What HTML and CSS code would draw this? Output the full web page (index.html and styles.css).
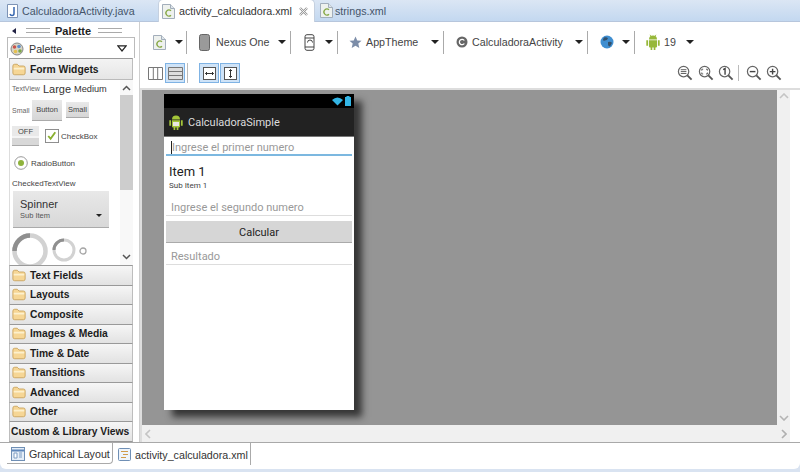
FILE: index.html
```html
<!DOCTYPE html>
<html lang="es">
<head>
<meta charset="utf-8">
<title>activity_calculadora.xml</title>
<link rel="stylesheet" href="styles.css">
</head>
<body>
<svg class="defs" width="0" height="0" aria-hidden="true">
  <symbol id="xml" viewBox="0 0 13 15"><path d="M.5.5h8l4 4v10H.5z" fill="#eef1ee" stroke="#a3aebb"/><path d="M8.500.5v4h4" fill="#dfe5ea" stroke="#a3aebb"/><path d="M9 6.800a3 3 0 1 0 0 4.400" fill="none" stroke="#86a844" stroke-width="1.300"/></symbol>
  <symbol id="folder" viewBox="0 0 16 14"><path d="M1 3q0-2 2-2h3l2 2h5q2 0 2 2v6q0 2-2 2H3q-2 0-2-2z" fill="#f6d695" stroke="#c8a25c"/><path d="M2 6h12" stroke="#fdf0cc" stroke-width="2"/></symbol>
  <symbol id="caret" viewBox="0 0 8 4"><path d="M0 0h8L4 4z" fill="#222"/></symbol>
  <symbol id="droid" viewBox="0 0 16 16"><path d="M4 5.500a4 4 0 0 1 8 0z M4 6.300h8v6.200q0 1-1 1h-.6V16H8.700v-2.500H7.300V16H5.600v-2.500H5q-1 0-1-1z M1.300 6.300h1.800v5.500H1.300z M12.900 6.300h1.800v5.500h-1.800z" fill="#97b83a"/><path d="M5 .8l1.300 2M11 .8L9.700 2.800" stroke="#97b83a" stroke-width=".8"/></symbol>
  <symbol id="zoom" viewBox="0 0 17 17"><circle cx="7" cy="7" r="5.500" fill="#fff" stroke="#666" stroke-width="1.300"/><path d="M11 11l4.500 4.500" stroke="#555" stroke-width="2"/></symbol>
</svg>

<div class="window">
  <nav class="tabs">
    <div class="tab java"><svg class="ic-java" viewBox="0 0 11 14"><path d="M.5.500h10v13H.5z" fill="#fff" stroke="#7d93b5"/><path d="M7 3v6.500q0 2-2 2-1.500 0-2-1.500" fill="none" stroke="#3566b0" stroke-width="1.500"/></svg><span>CalculadoraActivity.java</span></div>
    <div class="tab active"><svg class="ic-xml"><use href="#xml"/></svg><span>activity_calculadora.xml</span><svg class="close" viewBox="0 0 9 9"><path d="M1 1l7 7M8 1L1 8" stroke="#999" stroke-width="2.400"/><path d="M1 1l7 7M8 1L1 8" stroke="#fff" stroke-width=".8"/></svg></div>
    <div class="tab strings"><svg class="ic-xml"><use href="#xml"/></svg><span>strings.xml</span></div>
  </nav>

  <div class="editor">
    <div class="main">
      <aside class="palette">
        <div class="pal-title"><span class="back"></span><span class="grip"></span><b>Palette</b><span class="grip"></span></div>
        <div class="pal-select">
          <svg class="i14" viewBox="0 0 14 14"><circle cx="7" cy="7" r="6" fill="#d9d4c4" stroke="#888"/><circle cx="4.500" cy="5" r="1.800" fill="#c9534b"/><circle cx="9" cy="4.500" r="1.800" fill="#5b8fce"/><circle cx="10" cy="9" r="1.800" fill="#7ba64a"/><circle cx="5.500" cy="9.500" r="1.800" fill="#e6c04f"/></svg>
          <span>Palette</span>
          <svg class="tri" viewBox="0 0 10 7"><path d="M.8.800h8.400L5 6z" fill="#fff" stroke="#222" stroke-width="1.200"/></svg>
        </div>
        <div class="acc open"><svg class="fold"><use href="#folder"/></svg>Form Widgets</div>
        <div class="widgets">
          <div class="w-list">
            <div class="w-row r1"><span class="tiny">TextView</span><span class="large">Large</span><span class="medium">Medium</span></div>
            <div class="w-row r2"><span class="tiny small-l">Small</span><span class="btn b-normal">Button</span><span class="btn b-small">Small</span></div>
            <div class="w-row r3"><span class="btn b-off">OFF</span><svg class="check" viewBox="0 0 15 15"><rect x=".5" y=".5" width="14" height="14" fill="#fff" stroke="#888"/><path d="M3.500 7.500l2.500 3 5-7" fill="none" stroke="#8ab030" stroke-width="2"/></svg><span class="w-text">CheckBox</span></div>
            <div class="w-row r4"><svg class="radio" viewBox="0 0 14 14"><circle cx="7" cy="7" r="6.300" fill="#fff" stroke="#999"/><circle cx="7" cy="7" r="3" fill="#8fb33c"/></svg><span class="w-text">RadioButton</span></div>
            <div class="w-row r5"><span class="w-text">CheckedTextView</span></div>
            <div class="spinner"><div><div class="sp-main">Spinner</div><div class="sp-sub">Sub Item</div></div><svg class="sp-caret"><use href="#caret"/></svg></div>
            <div class="w-row r7">
              <svg class="ring-l" viewBox="0 0 36 36"><circle cx="18" cy="18" r="15.500" fill="none" stroke="#d2d2d2" stroke-width="4.500"/><path d="M2.500 18A15.500 15.500 0 0 1 18 2.500" fill="none" stroke="#8f8f8f" stroke-width="4.500"/></svg>
              <svg class="ring-m" viewBox="0 0 24 24"><circle cx="12" cy="12" r="10" fill="none" stroke="#d2d2d2" stroke-width="3"/><path d="M12 2A10 10 0 0 0 2 12" fill="none" stroke="#8f8f8f" stroke-width="3"/></svg>
              <svg class="ring-s" viewBox="0 0 8 8"><circle cx="4" cy="4" r="3" fill="none" stroke="#a5a5a5" stroke-width="1.300"/></svg>
            </div>
          </div>
          <div class="vbar">
            <svg class="arrow" viewBox="0 0 9 6"><path d="M1 5l3.500-3.500L8 5" fill="none" stroke="#555" stroke-width="1.500"/></svg>
            <div class="thumb"></div>
            <svg class="arrow" viewBox="0 0 9 6"><path d="M1 1l3.500 3.500L8 1" fill="none" stroke="#555" stroke-width="1.500"/></svg>
          </div>
        </div>
        <div class="acc"><svg class="fold"><use href="#folder"/></svg>Text Fields</div>
        <div class="acc"><svg class="fold"><use href="#folder"/></svg>Layouts</div>
        <div class="acc"><svg class="fold"><use href="#folder"/></svg>Composite</div>
        <div class="acc"><svg class="fold"><use href="#folder"/></svg>Images &amp; Media</div>
        <div class="acc"><svg class="fold"><use href="#folder"/></svg>Time &amp; Date</div>
        <div class="acc"><svg class="fold"><use href="#folder"/></svg>Transitions</div>
        <div class="acc"><svg class="fold"><use href="#folder"/></svg>Advanced</div>
        <div class="acc"><svg class="fold"><use href="#folder"/></svg>Other</div>
        <div class="acc custom">Custom &amp; Library Views</div>
      </aside>

      <section class="work">
        <div class="toolbar tb1">
          <div class="tb-item t-cfg"><svg class="ic-xml"><use href="#xml"/></svg><svg class="car"><use href="#caret"/></svg></div>
          <div class="tb-item t-dev"><svg class="phone-ic" viewBox="0 0 11 17"><rect x=".5" y=".5" width="10" height="16" rx="2" fill="#9a9a9a" stroke="#666"/></svg><span>Nexus One</span><svg class="car"><use href="#caret"/></svg></div>
          <div class="tb-item t-rot"><svg class="rot-ic" viewBox="0 0 12 17"><rect x="1" y=".7" width="9" height="15.600" rx="2" fill="#fff" stroke="#444"/><path d="M1 4h9M1 13h9M3.500 8.500a2.500 2.500 0 0 1 5 0" fill="none" stroke="#444"/></svg><svg class="car"><use href="#caret"/></svg></div>
          <div class="tb-item t-theme"><svg class="star" viewBox="0 0 14 14"><path d="M7 .5l1.900 4.300 4.600.4-3.500 3 1.100 4.600L7 10.400l-4.100 2.400L4 8.200.5 5.200l4.600-.4z" fill="#7c8da8"/></svg><span>AppTheme</span><svg class="car"><use href="#caret"/></svg></div>
          <div class="tb-item t-act"><svg class="c-ic" viewBox="0 0 12 12"><circle cx="6" cy="6" r="5.500" fill="#666"/><path d="M8.300 4.500a2.700 2.700 0 1 0 0 3" fill="none" stroke="#fff" stroke-width="1.300"/></svg><span>CalculadoraActivity</span><svg class="car"><use href="#caret"/></svg></div>
          <div class="tb-item t-glob"><svg class="globe" viewBox="0 0 14 14"><circle cx="7" cy="7" r="6.500" fill="#3f8ed0"/><path d="M4 2.500q3-1 4 1-1 2-3 2-2 1-2-1zM8 7q3-1 4 1l-2 3.500q-2 0-2-2z" fill="#33506b"/></svg><svg class="car"><use href="#caret"/></svg></div>
          <div class="tb-item t-api"><svg class="ic-droid"><use href="#droid"/></svg><span>19</span><svg class="car"><use href="#caret"/></svg></div>
        </div>
        <div class="toolbar tb2">
          <div class="tog"><span class="tg"><svg viewBox="0 0 15 13"><path d="M.5.500h14v12H.5zM5.300.500v12M9.700.500v12" fill="#fff" stroke="#777"/></svg></span><span class="tg on"><svg viewBox="0 0 15 13"><path d="M.5.500h14v12H.5z" fill="#ddd" stroke="#777"/><path d="M.5 4.500h14M.5 8.500h14" stroke="#777"/></svg></span></div>
          <span class="vsep"></span>
          <div class="tog fit"><span class="tg on"><svg viewBox="0 0 13 13"><rect x=".5" y=".5" width="12" height="12" fill="#fff" stroke="#555"/><path d="M2.500 6.500h8M4 5L2.500 6.500 4 8M9 5l1.500 1.500L9 8" fill="none" stroke="#333"/></svg></span><span class="tg on"><svg viewBox="0 0 13 13"><rect x=".5" y=".5" width="12" height="12" fill="#fff" stroke="#555"/><path d="M6.500 2.500v8M5 4l1.500-1.500L8 4M5 9l1.500 1.500L8 9" fill="none" stroke="#333"/></svg></span></div>
          <div class="zooms">
            <svg class="z z1" viewBox="0 0 17 17"><use href="#zoom"/><path d="M4 5h6M4 7h6M4 9h6" stroke="#555"/></svg>
            <svg class="z" viewBox="0 0 17 17"><use href="#zoom"/><path d="M4 4.500h1.500M8.500 4.500H10M4 9.500h1.500M8.500 9.500H10M4 4.500V6M10 4.500V6M4 8v1.500M10 8v1.500" stroke="#555"/></svg>
            <svg class="z" viewBox="0 0 17 17"><use href="#zoom"/><path d="M5.500 5l2-1.200v6.500" fill="none" stroke="#444" stroke-width="1.500"/></svg>
            <span class="zsep"></span>
            <svg class="z" viewBox="0 0 17 17"><use href="#zoom"/><path d="M4 7h6" stroke="#444" stroke-width="1.500"/></svg>
            <svg class="z" viewBox="0 0 17 17"><use href="#zoom"/><path d="M4 7h6M7 4v6" stroke="#444" stroke-width="1.500"/></svg>
          </div>
        </div>
        <div class="canvas-area">
          <div class="canvas-row">
            <div class="canvas">
              <div class="device">
                <div class="status">
                  <svg class="wifi" viewBox="0 0 11 9"><path d="M5.500 8.500L0 3q5.500-5 11 0z" fill="#33b5e5"/></svg>
                  <svg class="batt" viewBox="0 0 6 10"><path d="M1.500 0h3v1H6v9H0V1h1.500z" fill="#33b5e5"/></svg>
                </div>
                <div class="actionbar">
                  <svg class="app-ic" viewBox="0 0 16 16"><path d="M4 5.500a4 4 0 0 1 8 0z M4 6.300h8v6.200q0 1-1 1h-.6V16H8.700v-2.500H7.300V16H5.600v-2.500H5q-1 0-1-1z M1.300 6.300h1.800v5.500H1.300z M12.900 6.300h1.800v5.500h-1.800z" fill="#a4c639"/><rect x="5" y="8" width="6" height="4" fill="#e8e8e0"/></svg>
                  <span>CalculadoraSimple</span>
                </div>
                <div class="screen">
                  <div class="field focus"><i class="cursor"></i>Ingrese el primer numero</div>
                  <div class="item"><div class="item-t">Item 1</div><div class="item-s">Sub Item 1</div></div>
                  <div class="field second">Ingrese el segundo numero</div>
                  <div class="calc">Calcular</div>
                  <div class="field third">Resultado</div>
                </div>
              </div>
            </div>
            <div class="canvas-v">
              <svg class="sarrow" viewBox="0 0 10 6"><path d="M1 5l4-4 4 4" fill="none" stroke="#c4c4c4" stroke-width="1.600"/></svg>
              <svg class="sarrow" viewBox="0 0 10 6"><path d="M1 1l4 4 4-4" fill="none" stroke="#b4b4b4" stroke-width="1.600"/></svg>
            </div>
          </div>
          <div class="canvas-h">
            <svg class="harrow" viewBox="0 0 6 10"><path d="M5 1L1 5l4 4" fill="none" stroke="#c4c4c4" stroke-width="1.600"/></svg>
            <svg class="harrow" viewBox="0 0 6 10"><path d="M1 1l4 4-4 4" fill="none" stroke="#b0b0b0" stroke-width="1.600"/></svg>
          </div>
        </div>
      </section>
    </div>
    <footer class="bottom">
      <div class="btab sel"><svg class="i14" viewBox="0 0 14 14"><rect x=".5" y=".5" width="13" height="13" fill="#e5eef8" stroke="#6f8fb5"/><path d="M1 3.500h12" stroke="#5d86bb" stroke-width="2"/><path d="M3 6h3v5H3zM8 6h3M8 8h3M8 10h3" fill="#fff" stroke="#7d9cc2"/></svg><span>Graphical Layout</span></div>
      <div class="btab"><svg class="ic-src" viewBox="0 0 13 13"><rect x=".5" y=".5" width="12" height="12" rx="1" fill="#eef4fb" stroke="#6f8fb5"/><path d="M3 3.500h7M5 6.500h5M3 9.500h5" stroke="#d09a4a" stroke-width="1.200"/></svg><span>activity_calculadora.xml</span></div>
    </footer>
  </div>
</div>
</body>
</html>
```
FILE: styles.css
```css
* { box-sizing: border-box; }
html, body { margin: 0; padding: 0; }
body { width: 800px; height: 472px; overflow: hidden; background: #d9e3f1; font-family: "Liberation Sans", Arial, sans-serif; font-size: 10.700px; color: #333; white-space: nowrap; }
.defs { position: absolute; }
.window { width: 800px; height: 472px; display: flex; flex-direction: column; }

.tabs { height: 22px; flex: none; display: flex; align-items: flex-end; background: linear-gradient(#dbe6f4, #c3d8f0); border-bottom: 1px solid #b7c6dc; }
.tab { height: 21px; display: flex; align-items: center; gap: 4px; color: #44546a; }
.java { width: 158px; padding-left: 7px; }
.active { width: 157px; height: 23px; margin-bottom: -1px; background: #fff; border: 1px solid #c5d0df; border-bottom: 0; border-radius: 5px 5px 0 0; padding-left: 3px; color: #333; position: relative; z-index: 1; }
.strings { padding-left: 5px; gap: 2px; }
.close { width: 9px; height: 9px; margin-left: 3px; flex: none; }
.ic-java { width: 11px; height: 14px; flex: none; }
.ic-xml { width: 13px; height: 15px; flex: none; }
.i14 { width: 14px; height: 14px; flex: none; }

.editor { flex: 1; margin-bottom: 3px; background: #fff; display: flex; flex-direction: column; border-radius: 0 0 6px 6px; min-height: 0; }
.main { height: 421px; flex: none; display: flex; border-bottom: 1px solid #a9a9a9; }

.palette { width: 140px; flex: none; padding-left: 7px; border-right: 1px solid #cfcfcf; display: flex; flex-direction: column; }
.pal-title { height: 15px; display: flex; align-items: center; gap: 5px; padding: 2px 0 0 5px; font-size: 11px; color: #222; }
.back { width: 0; height: 0; border: 3px solid transparent; border-right: 4px solid #224; border-left: 0; margin-right: 3px; }
.grip { width: 24px; height: 5px; border-top: 1px solid #aaa; border-bottom: 1px solid #aaa; margin-left: 2px; }
.pal-select { height: 21px; margin-right: 4px; border: 1px solid #bbb; border-bottom: 0; display: flex; align-items: center; gap: 5px; padding: 1px 0 0 2px; color: #333; }
.tri { width: 10px; height: 7px; margin-left: auto; margin-right: 7px; }
.acc { height: 19.500px; flex: none; margin: 0 6px 0 2px; background: linear-gradient(#f6f6f6, #e2e2e2); border: 1px solid #bdbdbd; border-top-color: #999; border-bottom: 0; display: flex; align-items: center; gap: 4px; padding-left: 2px; font-size: 10.300px; font-weight: 700; color: #1c1c1c; }
.acc.open { height: 22px; background: linear-gradient(#f3f3f3, #e6e6e6); border-bottom: 1px solid #bbb; }
.acc.custom { padding-left: 1px; height: 21px; border-bottom: 1px solid #999; }
.fold { width: 14px; height: 13px; flex: none; }

.widgets { height: 185px; flex: none; margin: 0 6px 0 2px; display: flex; border-left: 1px solid #ddd; overflow: hidden; }
.w-list { width: 110px; flex: none; display: flex; flex-direction: column; padding-left: 2px; }
.w-row { display: flex; align-items: center; flex: none; }
.tiny { font-size: 7px; color: #666; }
.r1 { height: 17px; gap: 3px; }
.large { font-size: 11px; color: #333; }
.medium { font-size: 9.200px; color: #333; }
.r2 { height: 26px; gap: 4px; }
.small-l { width: 16px; }
.btn { display: flex; align-items: center; justify-content: center; font-size: 7.500px; color: #444; background: linear-gradient(#e9e9e9, #d6d6d6); border-bottom: 1px solid #aaa; }
.b-normal { width: 30px; height: 21px; }
.b-small { width: 23px; height: 16px; }
.r3 { height: 26px; }
.b-off { width: 27px; height: 20px; align-items: flex-start; padding-top: 1px; background: linear-gradient(#e9e9e9 55%, #f4f4f4 55%, #f4f4f4 65%, #d8d8d8 65%); }
.check { width: 14px; height: 14px; margin-left: 6px; margin-right: 2px; }
.w-text { font-size: 8px; color: #444; }
.r4 { height: 28px; margin-left: 2px; gap: 3px; }
.radio { width: 14px; height: 14px; }
.r5 { height: 12px; }
.spinner { width: 96px; height: 37px; margin: 2px 0 0 1px; background: linear-gradient(#e8e8e8, #d8d8d8); border-bottom: 1px solid #aaa; display: flex; align-items: center; justify-content: space-between; padding: 0 7px; flex: none; }
.sp-main { font-size: 11px; color: #333; }
.sp-sub { font-size: 7.500px; color: #555; margin-top: 1px; }
.sp-caret { width: 6px; height: 3px; margin-top: 12px; }
.r7 { margin-top: 5px; gap: 4px; }
.ring-l { width: 36px; height: 36px; flex: none; }
.ring-m { width: 24px; height: 24px; flex: none; margin-top: -2px; }
.ring-s { width: 8px; height: 8px; flex: none; margin-left: -1px; }
.vbar { width: 13px; flex: none; background: #f8f8f8; display: flex; flex-direction: column; align-items: center; padding: 5px 0; }
.thumb { width: 13px; height: 95px; flex: none; margin: 4px 0 auto; background: #cdcdcd; }
.arrow { width: 9px; height: 6px; flex: none; }

.work { flex: 1; min-width: 0; display: flex; flex-direction: column; }
.toolbar { display: flex; align-items: center; flex: none; }
.tb1 { height: 40px; padding-left: 11px; color: #444; }
.tb-item { display: flex; align-items: center; height: 23px; border-right: 1px solid #aaa; flex: none; }
.car { width: 8px; height: 4px; flex: none; }
.t-cfg { width: 36px; gap: 9px; padding-left: 2px; }
.t-dev { width: 104px; padding-left: 12px; }
.t-dev span { width: 50px; margin: 0 12px 0 6px; }
.phone-ic { width: 11px; height: 17px; flex: none; }
.t-rot { width: 47px; padding-left: 13px; gap: 9px; }
.rot-ic { width: 12px; height: 17px; flex: none; }
.t-theme { width: 106px; padding-left: 11px; }
.star { width: 13px; height: 13px; flex: none; }
.t-theme span { width: 53px; margin: 0 12px 0 4px; }
.t-act { width: 144px; padding-left: 12px; }
.c-ic { width: 12px; height: 12px; flex: none; }
.t-act span { width: 91px; margin: 0 12px 0 4px; }
.t-glob { width: 47px; padding-left: 12px; gap: 8px; }
.globe { width: 14px; height: 14px; flex: none; }
.t-api { padding-left: 10px; border: 0; }
.ic-droid { width: 16px; height: 16px; flex: none; }
.t-api span { width: 12px; margin: 0 10px 0 3px; }

.tb2 { height: 26px; padding: 0 0 4px 5px; }
.tog { display: flex; }
.fit { gap: 1px; margin-left: 11px; }
.tg { width: 20px; height: 20px; display: flex; align-items: center; justify-content: center; border: 1px solid transparent; }
.tg svg { width: 15px; height: 13px; }
.tg.on { background: #cfe3f7; border-color: #7fb3e4; }
.vsep { width: 1px; height: 20px; background: #bbb; margin-left: 2px; }
.fit .tg svg { width: 13px; height: 13px; }
.zooms { margin-left: auto; margin-right: 18px; display: flex; align-items: center; gap: 4px; }
.z { width: 16px; height: 16px; flex: none; }
.z1 { margin-right: 1px; }
.zsep { width: 1px; height: 16px; background: #bbb; margin-right: 3px; }

.canvas-area { height: 354px; flex: none; border-top: 2px solid #ddd; border-left: 2px solid #ddd; display: flex; flex-direction: column; }
.canvas-row { height: 335px; display: flex; flex: none; }
.canvas { width: 635px; height: 335px; flex: none; background: #959595; padding: 4px 0 0 22px; overflow: hidden; }
.canvas-v { width: 13px; flex: none; background: #f0f0f0; display: flex; flex-direction: column; justify-content: space-between; align-items: center; padding: 3px 0 4px; }
.canvas-h { flex: 1; margin-right: 10px; background: #f0f0f0; display: flex; justify-content: space-between; align-items: center; padding: 0 3px; }
.sarrow { width: 10px; height: 6px; }
.harrow { width: 6px; height: 10px; }

.device { width: 190px; height: 316px; background: #fff; box-shadow: 8px 7px 7px rgba(30, 30, 30, .8); font-family: Roboto, "Liberation Sans", sans-serif; }
.status { height: 14px; background: #000; display: flex; justify-content: flex-end; align-items: center; gap: 2px; padding-right: 3px; }
.wifi { width: 11px; height: 9px; }
.batt { width: 6px; height: 10px; }
.actionbar { height: 29px; background: #222; border-bottom: 1px solid #777; display: flex; align-items: center; gap: 4px; padding-left: 4px; color: #ddd; font-size: 11px; }
.app-ic { width: 16px; height: 16px; }
.screen { padding: 0 2px; display: flex; flex-direction: column; }
.field { height: 19px; padding: 4px 0 0 5px; font-size: 11px; line-height: 14px; color: #999; border-bottom: 1px solid #ddd; }
.field.focus { border-bottom: 2px solid #7cb8e0; display: flex; }
.cursor { display: block; width: 1px; height: 13px; background: #222; }
.item { height: 40px; padding: 8px 0 0 3px; }
.item-t { font-size: 13px; line-height: 15px; color: #222; }
.item-s { font-size: 8px; line-height: 10px; margin-top: 2px; color: #444; }
.second { height: 20px; padding-top: 5px; }
.calc { height: 22px; margin-top: 5px; padding-top: 1px; background: #d6d6d6; border-bottom: 1px solid #aaa; display: flex; align-items: center; justify-content: center; font-size: 11px; color: #222; }
.third { height: 22px; padding-top: 7px; }

.bottom { flex: 1; display: flex; padding-left: 7px; color: #333; align-items: flex-start; }
.btab { height: 22px; display: flex; align-items: center; gap: 4px; padding: 1px 0 0 5px; border-right: 1px solid #aaa; }
.btab.sel { width: 106px; height: 21px; border-bottom: 1px solid #aaa; border-radius: 0 0 4px 0; padding-left: 4px; }
.ic-src { width: 13px; height: 13px; flex: none; }
.btab + .btab { width: 138px; }
```
